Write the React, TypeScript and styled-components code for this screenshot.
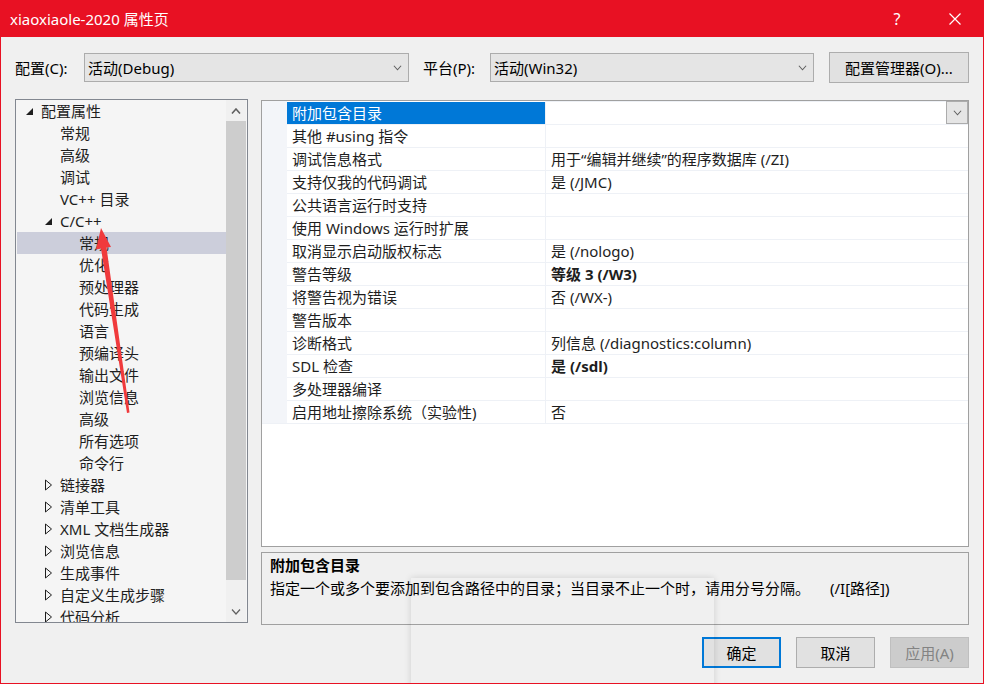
import React from "react";
import styled, { createGlobalStyle, css } from "styled-components";

const FONT = `"Noto Sans", "Noto Sans CJK SC", sans-serif`;

const GlobalStyle = createGlobalStyle`
  html, body {
    margin: 0;
    padding: 0;
    background: #f0f0f0;
  }
  body {
    font-family: ${FONT};
    font-size: 15px;
    color: #1e1e1e;
  }
  * { box-sizing: border-box; }
`;

const Window = styled.div`
  position: relative;
  width: 984px;
  height: 684px;
  border: 1px solid #e81123;
  border-top: none;
  background: #f0f0f0;
  display: flex;
  flex-direction: column;
  overflow: hidden;
`;

const TitleBar = styled.div`
  height: 37px;
  margin: 0 -1px;
  background: #e81123;
  color: #fff;
  display: flex;
  align-items: center;
  padding-left: 10px;
  flex-shrink: 0;
`;

const TitleText = styled.div`
  flex: 1;
  font-size: 15px;
  line-height: 20px;
`;

const CaptionButton = styled.div`
  width: 58px;
  height: 37px;
  display: flex;
  align-items: center;
  justify-content: center;
  font-size: 16px;
  color: #fff;
`;

const Content = styled.div`
  flex: 1;
  padding: 15px 14px 0 14px;
  display: flex;
  flex-direction: column;
`;

const ConfigRow = styled.div`
  height: 31px;
  display: flex;
  align-items: center;
`;

const Label = styled.div<{ $w: number; $ml?: number }>`
  width: ${(p) => p.$w}px;
  margin-left: ${(p) => p.$ml || 0}px;
  line-height: 22px;
  color: #000;
`;

const Combo = styled.div<{ $w: number }>`
  width: ${(p) => p.$w}px;
  height: 29px;
  border: 1px solid #acacac;
  background: #e5e5e5;
  display: flex;
  align-items: center;
  justify-content: space-between;
  padding: 0 6px 0 3px;
  color: #000;
`;

const PushButton = styled.div<{ $w: number; $ml?: number; $h?: number; $variant?: "default" | "normal" | "disabled" }>`
  width: ${(p) => p.$w}px;
  height: ${(p) => p.$h || 31}px;
  margin-left: ${(p) => p.$ml || 0}px;
  display: flex;
  align-items: center;
  justify-content: center;
  background: #e1e1e1;
  border: 1px solid #adadad;
  color: #000;
  ${(p) =>
    p.$variant === "default" &&
    css`
      border: 2px solid #0078d7;
    `}
  ${(p) =>
    p.$variant === "disabled" &&
    css`
      background: #cccccc;
      border-color: #bfbfbf;
      color: #838383;
    `}
`;

const Main = styled.div`
  margin-top: 16px;
  display: flex;
  gap: 13px;
`;

const TreePanel = styled.div`
  width: 233px;
  height: 524px;
  border: 1px solid #828790;
  background: #f5f5f5;
  display: flex;
  overflow: hidden;
`;

const TreeList = styled.div`
  flex: 1;
  padding-left: 1px;
  overflow: hidden;
`;

const TreeRow = styled.div<{ $level: number; $selected?: boolean }>`
  height: 22px;
  display: flex;
  align-items: center;
  padding-left: ${(p) => 8 + p.$level * 19}px;
  background: ${(p) => (p.$selected ? "#cccedb" : "transparent")};
  white-space: nowrap;
  line-height: 22px;
`;

const Expander = styled.span`
  width: 16px;
  height: 22px;
  display: flex;
  align-items: center;
  flex-shrink: 0;
`;

const ScrollBar = styled.div`
  width: 20px;
  margin-right: 1px;
  display: flex;
  flex-direction: column;
  background: #f0f0f0;
`;

const ScrollArrow = styled.div`
  height: 21px;
  display: flex;
  align-items: center;
  justify-content: center;
`;

const ScrollThumb = styled.div`
  flex: 1;
  background: #cdcdcd;
  margin-bottom: 21px;
`;

const RightColumn = styled.div`
  width: 708px;
  display: flex;
  flex-direction: column;
`;

const Grid = styled.div`
  margin-top: 1px;
  height: 447px;
  border: 1px solid #a0a0a0;
  background: #fff;
`;

const PropTable = styled.div`
  display: grid;
  grid-template-columns: 25px 259px 1fr;
  border-bottom: 1px solid #eef1f6;
  width: 100%;
`;

const Gutter = styled.div`
  background: #f3f5f9;
  height: 23px;
`;

const NameCell = styled.div<{ $selected?: boolean }>`
  height: 23px;
  border-top: 1px solid #eef1f6;
  border-right: 1px solid #eef1f6;
  padding-left: 5px;
  line-height: 22px;
  white-space: nowrap;
  color: #1e1e1e;
  ${(p) =>
    p.$selected &&
    css`
      background: #0078d7;
      border-top-color: #fff;
      color: #fff;
    `}
`;

const ValueCell = styled.div<{ $bold?: boolean }>`
  height: 23px;
  border-top: 1px solid #eef1f6;
  padding-left: 5px;
  line-height: 22px;
  white-space: nowrap;
  font-weight: ${(p) => (p.$bold ? 700 : 400)};
  display: flex;
  justify-content: space-between;
`;

const CellDrop = styled.div`
  width: 22px;
  height: 23px;
  margin-top: -1px;
  background: #e5e5e5;
  border: 1px solid #acacac;
  display: flex;
  align-items: center;
  justify-content: center;
`;

const DescPanel = styled.div`
  margin-top: 5px;
  height: 73px;
  border: 1px solid #a0a0a0;
  padding: 1px 8px 0 8px;
  line-height: 23px;
  color: #000;
`;

const DescTitle = styled.div`
  font-weight: 700;
`;

const DescPath = styled.span`
  margin-left: 20px;
`;

const Footer = styled.div`
  margin-top: 12px;
  display: flex;
  justify-content: flex-end;
  gap: 15px;
`;

const PopupShadow = styled.div`
  position: absolute;
  left: 410px;
  top: 578px;
  width: 303px;
  height: 130px;
  box-shadow: 0 0 7px rgba(0, 0, 0, 0.14);
  pointer-events: none;
`;

const Annotation = styled.svg`
  position: absolute;
  left: 0;
  top: 0;
  pointer-events: none;
`;

const Chevron = ({ up, color = "#606060", w = 10 }: { up?: boolean; color?: string; w?: number }) => (
  <svg width={w} height={6} viewBox="0 0 10 6">
    <path d={up ? "M1 5.5 L5 1 L9 5.5" : "M1 0.5 L5 5 L9 0.5"} fill="none" stroke={color} strokeWidth={up ? 1.6 : 1.2} />
  </svg>
);

const ExpandedIcon = () => (
  <svg width={9} height={9} viewBox="0 0 9 9">
    <path d="M8 1 L8 8 L1 8 Z" fill="#1e1e1e" />
  </svg>
);

const CollapsedIcon = () => (
  <svg width={9} height={12} viewBox="0 0 9 12">
    <path d="M1.5 1 L7.5 6 L1.5 11 Z" fill="none" stroke="#1e1e1e" strokeWidth={1} />
  </svg>
);

type TreeItem = { label: string; level: number; exp?: "open" | "closed"; selected?: boolean };

const tree: TreeItem[] = [
  { label: "配置属性", level: 0, exp: "open" },
  { label: "常规", level: 1 },
  { label: "高级", level: 1 },
  { label: "调试", level: 1 },
  { label: "VC++ 目录", level: 1 },
  { label: "C/C++", level: 1, exp: "open" },
  { label: "常规", level: 2, selected: true },
  { label: "优化", level: 2 },
  { label: "预处理器", level: 2 },
  { label: "代码生成", level: 2 },
  { label: "语言", level: 2 },
  { label: "预编译头", level: 2 },
  { label: "输出文件", level: 2 },
  { label: "浏览信息", level: 2 },
  { label: "高级", level: 2 },
  { label: "所有选项", level: 2 },
  { label: "命令行", level: 2 },
  { label: "链接器", level: 1, exp: "closed" },
  { label: "清单工具", level: 1, exp: "closed" },
  { label: "XML 文档生成器", level: 1, exp: "closed" },
  { label: "浏览信息", level: 1, exp: "closed" },
  { label: "生成事件", level: 1, exp: "closed" },
  { label: "自定义生成步骤", level: 1, exp: "closed" },
  { label: "代码分析", level: 1, exp: "closed" },
];

type PropItem = { name: string; value?: string; bold?: boolean };

const props: PropItem[] = [
  { name: "附加包含目录" },
  { name: "其他 #using 指令" },
  { name: "调试信息格式", value: "用于“编辑并继续”的程序数据库 (/ZI)" },
  { name: "支持仅我的代码调试", value: "是 (/JMC)" },
  { name: "公共语言运行时支持" },
  { name: "使用 Windows 运行时扩展" },
  { name: "取消显示启动版权标志", value: "是 (/nologo)" },
  { name: "警告等级", value: "等级 3 (/W3)", bold: true },
  { name: "将警告视为错误", value: "否 (/WX-)" },
  { name: "警告版本" },
  { name: "诊断格式", value: "列信息 (/diagnostics:column)" },
  { name: "SDL 检查", value: "是 (/sdl)", bold: true },
  { name: "多处理器编译" },
  { name: "启用地址擦除系统（实验性)", value: "否" },
];

export default function App() {
  return (
    <>
      <GlobalStyle />
      <Window>
        <TitleBar>
          <TitleText>xiaoxiaole-2020 属性页</TitleText>
          <CaptionButton>?</CaptionButton>
          <CaptionButton>
            <svg width={12} height={12} viewBox="0 0 12 12">
              <path d="M0.5 0.5 L11.5 11.5 M11.5 0.5 L0.5 11.5" stroke="#fff" strokeWidth={1.2} />
            </svg>
          </CaptionButton>
        </TitleBar>

        <Content>
          <ConfigRow>
            <Label $w={69}>配置(C):</Label>
            <Combo $w={325}>
              <span>活动(Debug)</span>
              <Chevron w={9} />
            </Combo>
            <Label $w={67} $ml={14}>平台(P):</Label>
            <Combo $w={324}>
              <span>活动(Win32)</span>
              <Chevron w={9} />
            </Combo>
            <PushButton $w={140} $ml={15}>配置管理器(O)...</PushButton>
          </ConfigRow>

          <Main>
            <TreePanel>
              <TreeList>
                {tree.map((t, i) => (
                  <TreeRow key={i} $level={t.level} $selected={t.selected}>
                    <Expander>
                      {t.exp === "open" && <ExpandedIcon />}
                      {t.exp === "closed" && <CollapsedIcon />}
                    </Expander>
                    {t.label}
                  </TreeRow>
                ))}
              </TreeList>
              <ScrollBar>
                <ScrollArrow>
                  <Chevron up />
                </ScrollArrow>
                <ScrollThumb />
                <ScrollArrow>
                  <Chevron />
                </ScrollArrow>
              </ScrollBar>
            </TreePanel>

            <RightColumn>
              <Grid>
                <PropTable>
                  {props.map((p, i) => (
                    <React.Fragment key={i}>
                      <Gutter />
                      <NameCell $selected={i === 0}>{p.name}</NameCell>
                      <ValueCell $bold={p.bold}>
                        <span>{p.value || ""}</span>
                        {i === 0 && (
                          <CellDrop>
                            <Chevron w={9} />
                          </CellDrop>
                        )}
                      </ValueCell>
                    </React.Fragment>
                  ))}
                </PropTable>
              </Grid>
              <DescPanel>
                <DescTitle>附加包含目录</DescTitle>
                <div>
                  指定一个或多个要添加到包含路径中的目录；当目录不止一个时，请用分号分隔。
                  <DescPath>(/I[路径])</DescPath>
                </div>
              </DescPanel>
            </RightColumn>
          </Main>

          <Footer>
            <PushButton $w={79} $h={31} $variant="default">确定</PushButton>
            <PushButton $w={79} $h={31}>取消</PushButton>
            <PushButton $w={79} $h={31} $variant="disabled">应用(A)</PushButton>
          </Footer>
        </Content>

        <PopupShadow />

        <Annotation width={984} height={684} viewBox="0 0 984 684">
          <polygon
            points="100,228 110,247 105.5,247.5 128.5,412.5 126,413 100,248.5 95,249.5"
            fill="#f03a3c"
          />
        </Annotation>
      </Window>
    </>
  );
}
